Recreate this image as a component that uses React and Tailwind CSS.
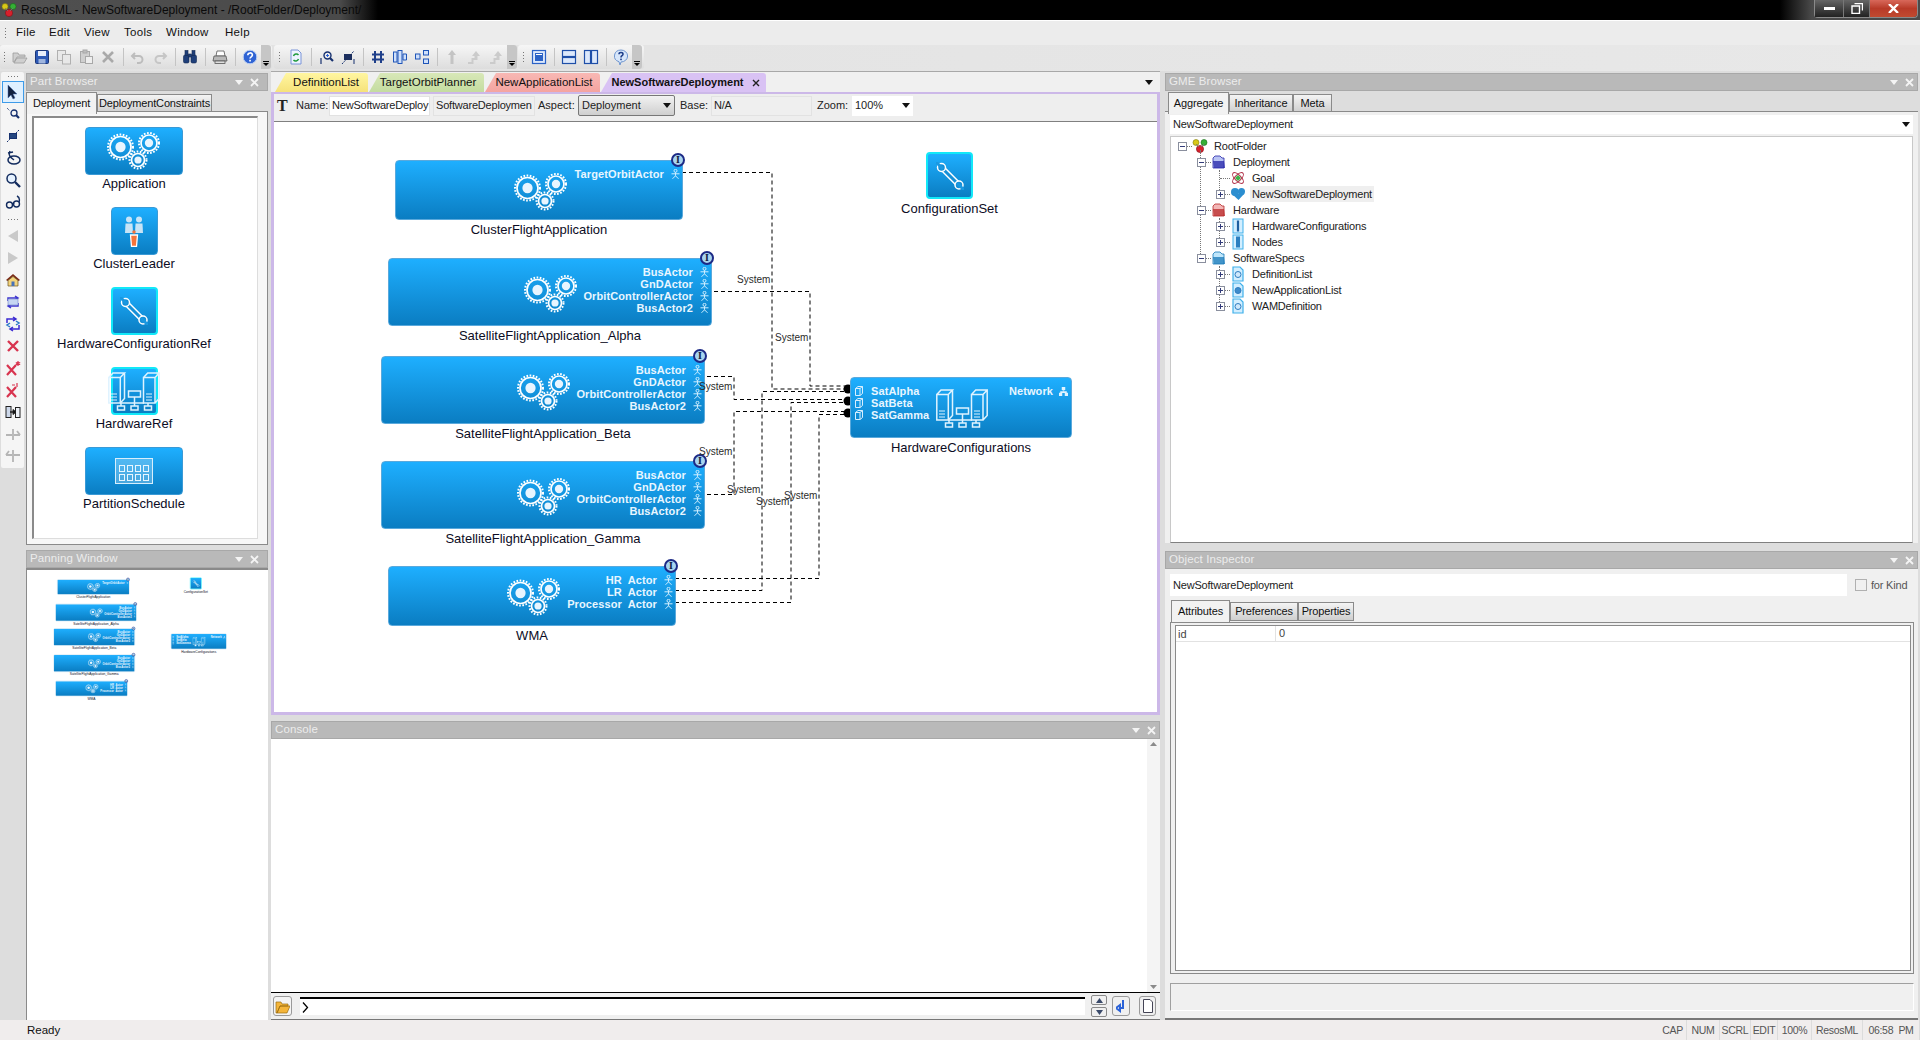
import React from 'react';

const Svg = ({ w = 16, h = 16, vb, className = '', children }) => (
  <svg width={w} height={h} viewBox={vb || `0 0 ${w} ${h}`} className={`shrink-0 ${className}`}>
    {children}
  </svg>
);

const Balls = ({ size = 16 }) => (
  <Svg w={size} h={size} vb="0 0 16 16">
    <circle cx="4" cy="4.5" r="3" fill="#d8c818" stroke="#7d7a10" strokeWidth=".6" />
    <circle cx="12" cy="4.5" r="3" fill="#35b035" stroke="#186b18" strokeWidth=".6" />
    <circle cx="8" cy="11" r="3.6" fill="#d8202c" stroke="#7d1018" strokeWidth=".6" />
    <path d="M4 6l3 3M12 6l-3 3" stroke="#777" strokeWidth=".8" />
  </Svg>
);

// toolbar icons
const icons = {
  open: <path d="M1 13V4h5l1 2h6v2H5l-3 5zm1 1l3-5h10l-3 5z" fill="#cfcfcf" stroke="#9c9c9c" strokeWidth=".8" />,
  save: <g><rect x="1.5" y="1.5" width="13" height="13" rx="1" fill="#2d59b5" stroke="#1b3678" /><rect x="4" y="2" width="8" height="5" fill="#e8eefa" /><rect x="4.5" y="10" width="7" height="4.5" fill="#9fb5de" /></g>,
  copy: <g fill="#e8e8e8" stroke="#b0b0b0"><rect x="1.5" y="1.5" width="8" height="10" /><rect x="6.5" y="5.5" width="8" height="9.5" /></g>,
  paste: <g stroke="#a8a8a8"><rect x="2.5" y="2.5" width="9" height="11" fill="#cfcfcf" /><rect x="5" y="1" width="4" height="3" fill="#bdbdbd" /><rect x="7.5" y="7.5" width="7" height="7" fill="#eee" /></g>,
  del: <path d="M3 3l10 10M13 3L3 13" stroke="#a9a9a9" strokeWidth="2.6" />,
  undo: <path d="M5 4L2 7l3 3M3 7h6a3.5 3.5 0 010 7H7" fill="none" stroke="#bdbdbd" strokeWidth="2" />,
  redo: <path d="M11 4l3 3-3 3M13 7H7a3.5 3.5 0 000 7h2" fill="none" stroke="#c6c6c6" strokeWidth="2" />,
  find: <g fill="#1f3f7a" stroke="#142a52" strokeWidth=".6"><rect x="1.5" y="6" width="5.5" height="8" rx="1.5" /><rect x="9" y="6" width="5.5" height="8" rx="1.5" /><rect x="3" y="1.5" width="3" height="5" /><rect x="10" y="1.5" width="3" height="5" /><rect x="6.5" y="5" width="3" height="3" /></g>,
  print: <g stroke="#555" strokeWidth=".8"><path d="M5 2h7l1 5H4z" fill="#fff" /><path d="M2 7h12l1 5H1z" fill="#b8b8b8" /><rect x="3" y="12" width="10" height="2.5" fill="#dedede" /></g>,
  help: <g><circle cx="8" cy="8" r="6.8" fill="#2f63d4" stroke="#b7ccf2" /><path d="M5.8 6.2c0-3 4.6-3 4.6-.2 0 1.8-2.4 1.8-2.4 3.6" fill="none" stroke="#fff" strokeWidth="1.6" /><rect x="7.2" y="10.8" width="1.7" height="1.7" fill="#fff" /></g>,
  doc: <g><path d="M3 1h7l3 3v11H3z" fill="#eef3ff" stroke="#7a94d8" /><path d="M5.5 7a3 3 0 015-1M10.5 10a3 3 0 01-5 1" fill="none" stroke="#1f9a3c" strokeWidth="1.5" /></g>,
  zoom1: <g stroke="#16306e" fill="none"><circle cx="9.5" cy="6.5" r="3.5" strokeWidth="1.4" /><path d="M12 9l3 3" strokeWidth="2.2" /><path d="M3 9v6" strokeWidth="1.2" /><path d="M8 6.5h3M9.5 5v3" stroke="#2a62d8" /></g>,
  fit: <g><path d="M2 15L14 2" stroke="#16306e" strokeDasharray="2 1" /><rect x="4" y="5" width="8" height="6" fill="#1c2f5e" /><path d="M14 10v5" stroke="#16306e" /></g>,
  grid: <path d="M5 2v12M11 2v12M2 5.5h12M2 10.5h12" stroke="#1f3f8a" strokeWidth="2" />,
  align: <g fill="#cfe0fb" stroke="#1f55b8"><rect x="1.5" y="3" width="3.5" height="10" /><rect x="6" y="1.5" width="4" height="13" /><path d="M11 5h3.5v6H11z" /></g>,
  nodes: <g fill="#cfe0fb" stroke="#1f55b8"><rect x="1.5" y="5" width="4.5" height="5" /><rect x="9.5" y="1.5" width="5" height="4.5" /><rect x="9.5" y="10" width="5" height="4.5" /></g>,
  up1: <path d="M8 1l4 5H9.5v9h-3V6H4z" fill="#c4c4c4" />,
  up2: <path d="M10 2l4 5h-2.5v4h-4v4H2v-2h3.5V9h3V7H6z" fill="#cbcbcb" />,
  panel: <g><rect x="1.5" y="1.5" width="13" height="13" fill="#dce8fb" stroke="#2b62c6" strokeWidth="1.2" /><rect x="4" y="4" width="8" height="8" fill="#2b62c6" /><rect x="5" y="5" width="6" height="1" fill="#fff" /></g>,
  split: <g fill="#dce8fb" stroke="#1f4fa8" strokeWidth="1.2"><rect x="1.5" y="1.5" width="13" height="6" /><rect x="1.5" y="8.5" width="13" height="6" /></g>,
  cols: <g fill="#dce8fb" stroke="#1f4fa8" strokeWidth="1.2"><rect x="1.5" y="1.5" width="6" height="13" /><rect x="8.5" y="1.5" width="6" height="13" /></g>,
  bubble: <g><path d="M8 1a6.6 6 0 110 12l-1 3-1-3.3A6.6 6 0 018 1z" fill="#d7e6fa" stroke="#6f95cf" /><path d="M6 5.2c0-2.2 4-2.2 4 0 0 1.5-2 1.5-2 3.2" fill="none" stroke="#1f3f8a" strokeWidth="1.6" /><rect x="7.2" y="9.6" width="1.6" height="1.6" fill="#1f3f8a" /></g>,
  arrow: <path d="M3 1v13l3-3 2 4 2-1-2-4h4z" fill="#10203f" stroke="#4a6fb0" strokeWidth=".5" />,
  connect: <g stroke="#16306e" fill="none"><circle cx="9" cy="7" r="3" strokeWidth="1.3" /><path d="M11 9l3 3" strokeWidth="2.2" /><path d="M2 2l3 3" strokeDasharray="1 1" /></g>,
  link: <g stroke="#16306e"><path d="M2 14L14 2" strokeDasharray="2 1" /><rect x="4.5" y="5.5" width="7" height="5" fill="#24467f" /></g>,
  lasso: <g fill="none" stroke="#122b5e" strokeWidth="1.5"><ellipse cx="9" cy="10" rx="6" ry="4" /><path d="M5 1c-2 4 0 6 4 9" /><path d="M3 3l5-1" /></g>,
  glass: <g fill="none" stroke="#122b5e"><circle cx="6.5" cy="6.5" r="4.5" strokeWidth="1.5" fill="#e6f2ff" /><path d="M10 10l5 5" strokeWidth="2.4" /></g>,
  specs: <g fill="none" stroke="#122b5e" strokeWidth="1.4"><circle cx="4.5" cy="11" r="3" /><circle cx="11.5" cy="10" r="3" /><path d="M7 10c1-.8 1.500-.8 2 0M14 8c1-3 0-5-2-6" /></g>,
  left: <path d="M13 2v12L3 8z" fill="#c9c9c9" />,
  right: <path d="M3 2v12l10-6z" fill="#c9c9c9" />,
  home: <g><path d="M1 8l7-6 7 6-1.500 1L8 4.500 2.500 9z" fill="#7a2a18" /><path d="M3 8.500L8 4.500l5 4V14H3z" fill="#f4d47c" stroke="#6b5520" strokeWidth=".7" /><rect x="6.500" y="9.500" width="3" height="4.500" fill="#4872b8" /></g>,
  loop: <g fill="none" stroke="#3c33cf" strokeWidth="1.5"><path d="M3 7V4h9M10 2l3 2-3 2M13 9v3H4M6 14l-3-2 3-2" /><rect x="3" y="5" width="10" height="6" fill="#c6d6f2" stroke="#7083c8" strokeWidth=".6" /></g>,
  loops: <g fill="none" stroke="#3b2ad2" strokeWidth="1.500"><path d="M2 7V3h8M8 1l3 2-3 2M14 9v4H6M8 15l-3-2 3-2" /><path d="M11 5l3 2-3 2M5 7l-3 2 3 2" stroke="#2b78c8" /></g>,
  x: <path d="M3 3l10 10M13 3L3 13" stroke="#d8344f" strokeWidth="2.4" />,
  xs: <g><path d="M2 5l9 10M11 5l-9 10" stroke="#d8344f" strokeWidth="2.200" /><path d="M13 1v5M10.800 2.500l4.400 2M15.200 2.500l-4.400 2" stroke="#d8344f" strokeWidth="1.200" /></g>,
  xm: <g><path d="M2 5l9 10M11 5l-9 10" stroke="#d8344f" strokeWidth="2.200" /><path d="M7 3h3M12 1v4" stroke="#d8344f" strokeWidth="1.200" /></g>,
  swap: <g stroke="#222"><rect x="1" y="2.500" width="5" height="11" fill="#cdd8ea" /><rect x="10.500" y="3.500" width="4.500" height="10" fill="#eef2f8" /><path d="M5 8h5" strokeWidth="1.500" /><path d="M8 5.500l3 2.500-3 2.500z" fill="#111" /></g>,
  jl: <path d="M1 9h6M9 9h6M8 3v11M12 5l3 4" stroke="#b5b5b5" strokeWidth="1.800" fill="none" />,
  jr: <path d="M1 7h6M9 7h6M8 2v12M4 3L1 7" stroke="#b5b5b5" strokeWidth="1.800" fill="none" />,
};

const Ico = ({ n, active }) => (
  <div className={`flex h-[22px] w-[22px] shrink-0 items-center justify-center ${active ? 'border border-[#3d9be9] bg-[#dff0ff]' : ''}`}>
    <Svg>{icons[n]}</Svg>
  </div>
);

const Sep = () => <div className="mx-[3.5px] h-[18px] w-px shrink-0 bg-[#c4c4c4]" />;

const Grip = ({ className = '' }) => (
  <div className={`flex shrink-0 flex-col items-center gap-[2px] ${className}`}>
    <i className="block h-px w-px bg-[#777]" />
    <i className="block h-px w-px bg-[#777]" />
    <i className="block h-px w-px bg-[#777]" />
    <i className="block h-px w-px bg-[#777]" />
  </div>
);

const Chevron = () => (
  <div className="flex h-full w-[10px] shrink-0 flex-col items-center justify-end gap-px rounded-r-[3px] bg-[#c6c6c6] pb-[3px]">
    <i className="block h-px w-[6px] bg-black" />
    <Svg w={6} h={3}><path d="M0 0h6L3 3z" fill="#000" /></Svg>
  </div>
);

const Toolbar = ({ className, gripClass, children }) => (
  <div className={`flex h-[24px] items-center rounded-[3px] bg-gradient-to-b from-[#f6f6f6] to-[#dddddd] ${className}`}>
    <Grip className={gripClass} />
    {children}
    <Chevron />
  </div>
);

function TitleBar() {
  return (
    <div className="flex h-[20px] items-center justify-between bg-[linear-gradient(90deg,#505050_0,#4a4a4a_340px,#000_378px,#000_1780px,#4a4a4a_1812px)]">
      <div className="flex items-center">
        <div className="ml-[1px] mr-[4px]"><Balls size={16} /></div>
        <span className="text-[12px] text-[#0a0a0a]">ResosML - NewSoftwareDeployment - /RootFolder/Deployment/</span>
      </div>
      <div className="mr-[2px] flex h-[18px] self-start rounded-b-[4px] border border-t-0 border-[#8a8a8a]">
        <div className="flex w-[29px] items-center justify-center border-r border-[#777] bg-gradient-to-b from-[#666] to-[#222]"><i className="block h-[3px] w-[11px] bg-white" /></div>
        <div className="flex w-[26px] items-center justify-center border-r border-[#777] bg-gradient-to-b from-[#666] to-[#222]">
          <Svg w={12} h={11}><path d="M3.500.5h8v7M1 3h7.500v7.500H1z" fill="none" stroke="#fff" strokeWidth="1.400" /></Svg>
        </div>
        <div className="flex w-[47px] items-center justify-center rounded-br-[4px] bg-gradient-to-b from-[#d8685a] via-[#b83a28] to-[#c04a30]">
          <Svg w={11} h={9}><path d="M1 0l9 9M10 0L1 9" stroke="#fff" strokeWidth="2.400" /></Svg>
        </div>
      </div>
    </div>
  );
}

function MenuBar() {
  const items = [['File', 'w-[33px]'], ['Edit', 'w-[35px]'], ['View', 'w-[40px]'], ['Tools', 'w-[42px]'], ['Window', 'w-[59px]'], ['Help', 'w-[40px]']];
  return (
    <div className="flex h-[25px] items-center border-t border-white bg-[#ececec] pl-[5px]">
      <Grip className="mr-[10px]" />
      {items.map(([t, w]) => <span key={t} className={`${w} text-[11.5px] tracking-[0.3px] text-[#111]`}>{t}</span>)}
    </div>
  );
}

function Toolbars() {
  return (
    <div className="flex h-[26px] items-start bg-gradient-to-r from-[#e2e2e2] to-[#e8e8e8]">
      <Toolbar className="w-[272px]" gripClass="w-[9px]">
        <Ico n="open" /><Ico n="save" /><Ico n="copy" /><Ico n="paste" /><Ico n="del" /><Sep />
        <Ico n="undo" /><Ico n="redo" /><Sep /><Ico n="find" /><Sep /><Ico n="print" /><Sep /><Ico n="help" />
      </Toolbar>
      <Toolbar className="ml-[2px] w-[243px]" gripClass="w-[11px]">
        <Ico n="doc" /><Sep /><Ico n="zoom1" /><Ico n="fit" /><Sep /><Ico n="grid" /><Ico n="align" /><Ico n="nodes" /><Sep />
        <Ico n="up1" /><Ico n="up2" /><Ico n="up2" />
      </Toolbar>
      <Toolbar className="ml-[1px] w-[126px]" gripClass="w-[10px]">
        <Ico n="panel" /><Sep /><Ico n="split" /><Ico n="cols" /><Sep /><Ico n="bubble" />
      </Toolbar>
    </div>
  );
}

function ToolStrip() {
  const top = ['arrow', 'connect', 'link', 'lasso', 'glass', 'specs'];
  const rest = ['left', 'right', 'home', 'loop', 'loops', 'x', 'xs', 'xm', 'swap', 'jl', 'jr'];
  return (
    <div className="ml-[1px] mt-px flex h-[396px] w-[23px] shrink-0 flex-col items-center rounded-[2px] bg-[#f5f5f5]">
      <div className="flex h-[8px] items-center gap-[2px]"><i className="h-px w-px bg-[#777]" /><i className="h-px w-px bg-[#777]" /><i className="h-px w-px bg-[#777]" /><i className="h-px w-px bg-[#777]" /></div>
      <div className="mt-[1px] flex flex-col">
        {top.map((n, i) => <Ico key={n} n={n} active={i === 0} />)}
      </div>
      <div className="my-[2px] flex h-[8px] items-center gap-[2px]"><i className="h-px w-px bg-[#777]" /><i className="h-px w-px bg-[#777]" /><i className="h-px w-px bg-[#777]" /><i className="h-px w-px bg-[#777]" /></div>
      <div className="flex flex-col">
        {rest.map((n) => <Ico key={n} n={n} />)}
      </div>
    </div>
  );
}

const PanelTitle = ({ title, className = '' }) => (
  <div className={`flex h-[18px] shrink-0 items-center justify-between border border-[#a8a8a8] bg-[#b9b9b9] pl-[3px] text-[11.5px] tracking-[0.1px] text-[#ececec] ${className}`}>
    <span>{title}</span>
    <div className="flex items-center gap-[7px]">
      <Svg w={8} h={5}><path d="M0 0h8L4 5z" fill="#f4f4f4" /></Svg>
      <Svg w={9} h={9}><path d="M1 1l7 7M8 1L1 8" stroke="#f4f4f4" strokeWidth="1.800" /></Svg>
    </div>
  </div>
);

const Tab = ({ active, className = '', children }) => (
  <div
    className={`flex shrink-0 items-center justify-center border border-[#8a8a8a] text-[11px] tracking-[-0.15px] text-[#111] ${
      active ? 'z-10 -mb-px mt-0 h-[22px] border-b-0 bg-[#f2f2f2]' : 'mt-[2px] h-[19px] bg-gradient-to-b from-[#f4f4f4] to-[#cfcfcf]'
    } ${className}`}
  >
    {children}
  </div>
);

// diagram pieces
const Gear = ({ cx, cy, r }) => (
  <g fill="none" stroke="#fff">
    <circle cx={cx} cy={cy} r={r - 1} strokeWidth="2" strokeDasharray="1.700 1.500" />
    <circle cx={cx} cy={cy} r={r - 3} strokeWidth="1.700" />
    <circle cx={cx} cy={cy} r={r * 0.38} fill="#e8f5ff" stroke="none" />
  </g>
);

const Gears = () => (
  <Svg w={54} h={38}>
    <Gear cx={13.500} cy={15} r={13.500} />
    <Gear cx={42} cy={11} r={11} />
    <Gear cx={31} cy={28} r={9.500} />
  </Svg>
);

const Person = () => (
  <Svg w={9} h={10}>
    <circle cx="4.500" cy="1.800" r="1.500" fill="none" stroke="#cfeeff" />
    <path d="M4.500 3.300v3.500M.5 4.800h8M4.500 6.800L1.500 9.800M4.500 6.800l3 3" fill="none" stroke="#cfeeff" />
  </Svg>
);

const Servers = () => (
  <Svg w={52} h={39}>
    <g fill="none" stroke="#dff3ff" strokeWidth="1.500">
      <path d="M.8 5.500h11.500V31H.8zM.8 5.500L5 1h11.500L12.300 5.500M16.500 1v25.500L12.300 31" />
      <path d="M35.500 5.500H47V31H35.500zM35.500 5.500L39.700 1h11.500L47 5.500M51.200 1v25.500L47 31" />
      <rect x="20.500" y="19" width="12" height="6" />
      <path d="M26.500 25v6M12 31h24M13 31v3M26.500 31v3M40 31v3" />
      <rect x="9.500" y="34" width="7" height="4" />
      <rect x="23" y="34" width="7" height="4" />
      <rect x="36.500" y="34" width="7" height="4" />
      <path d="M3 22h6M3 25h6M3 28h6M38 22h6M38 25h6M38 28h6" strokeWidth="1" />
    </g>
  </Svg>
);

const Wrench = () => (
  <Svg w={28} h={28}>
    <g fill="none" strokeLinecap="round">
      <path d="M8 8l13 13" stroke="#fff" strokeWidth="6" />
      <path d="M8 8l13 13" stroke="#1590d8" strokeWidth="3" />
      <circle cx="5.500" cy="5.500" r="4" fill="#1590d8" stroke="#fff" strokeWidth="1.500" />
      <circle cx="23" cy="23" r="4" fill="#1590d8" stroke="#fff" strokeWidth="1.500" />
      <path d="M1 1l5 5M27 27l-5-5" stroke="#1a98e0" strokeWidth="3" />
    </g>
  </Svg>
);

const Leaders = () => (
  <Svg w={20} h={31}>
    <g fill="#dcecf8" opacity=".9">
      <circle cx="5" cy="3.500" r="3" /><path d="M1.500 7.500h7l.5 9.500H1z" />
      <circle cx="15" cy="3.500" r="3" /><path d="M11.500 7.500h7l.5 9.500h-8z" />
    </g>
    <circle cx="10" cy="16" r="1.700" fill="#f4743b" />
    <path d="M6.500 19h7l-1 11.500h-5z" fill="#f4743b" stroke="#fff" strokeWidth="1.300" />
  </Svg>
);

const Schedule = () => (
  <div className="grid h-[26px] w-[38px] grid-cols-4 gap-x-[2px] gap-y-[2px] border border-[#d8eefc] bg-[#d8eefc]/30 px-[3px] pb-[2px] pt-[6px]">
    {Array.from({ length: 8 }).map((_, i) => <i key={i} className="block border border-[#e8f6ff]" />)}
  </div>
);

const blueBox = 'relative rounded-[4px] border border-[#5aa9dc] bg-gradient-to-b from-[#1eafff] to-[#0a7dc2]';

const Badge = () => (
  <div className="absolute -right-[3px] -top-[8px] flex h-[14px] w-[14px] items-center justify-center rounded-full border-2 border-[#1d2a86] bg-[#a9d5ee] [font-family:'Liberation_Serif',serif] text-[10px] font-bold leading-none text-[#10183f]">
    I
  </div>
);

const nodes = [
  { name: 'ClusterFlightApplication', pos: 'left-[121px] top-[38px]', box: 'w-[288px] h-[60px]', gear: 'left-[118px] top-[12px]', rows: ['TargetOrbitActor'] },
  { name: 'SatelliteFlightApplication_Alpha', pos: 'left-[114px] top-[136px]', box: 'w-[324px] h-[68px]', gear: 'left-[135px] top-[16px]', rows: ['BusActor', 'GnDActor', 'OrbitControllerActor', 'BusActor2'] },
  { name: 'SatelliteFlightApplication_Beta', pos: 'left-[107px] top-[234px]', box: 'w-[324px] h-[68px]', gear: 'left-[135px] top-[16px]', rows: ['BusActor', 'GnDActor', 'OrbitControllerActor', 'BusActor2'] },
  { name: 'SatelliteFlightApplication_Gamma', pos: 'left-[107px] top-[339px]', box: 'w-[324px] h-[68px]', gear: 'left-[135px] top-[16px]', rows: ['BusActor', 'GnDActor', 'OrbitControllerActor', 'BusActor2'] },
  { name: 'WMA', pos: 'left-[114px] top-[444px]', box: 'w-[288px] h-[60px]', gear: 'left-[118px] top-[11px]', rows: ['HR  Actor', 'LR  Actor', 'Processor  Actor'] },
];

const Label = ({ className = 'mt-[2px]', children }) => (
  <div className={`whitespace-nowrap text-center text-[13px] leading-[16px] text-[#0c0c24] ${className}`}>{children}</div>
);

const AppNode = ({ n }) => (
  <div className={`absolute flex flex-col items-center ${n.pos}`}>
    <div className={`${blueBox} ${n.box}`}>
      <div className={`absolute ${n.gear}`}><Gears /></div>
      <div className="absolute right-[2px] top-[7px] flex flex-col items-end">
        {n.rows.map((r) => (
          <div key={r} className="flex h-[12px] items-center gap-[7px]">
            <span className="whitespace-pre text-[11px] font-bold leading-[12px] tracking-[0.1px] text-[#e8f6ff]">{r}</span>
            <Person />
          </div>
        ))}
      </div>
      <Badge />
    </div>
    <Label>{n.name}</Label>
  </div>
);

const DiagramNodes = () => (
  <>
    {nodes.map((n) => <AppNode key={n.name} n={n} />)}
    <div className="absolute left-[652px] top-[30px] flex w-[47px] flex-col items-center">
      <div className="flex h-[47px] w-[47px] shrink-0 items-center justify-center rounded-[4px] border-2 border-[#12e8f8] bg-gradient-to-b from-[#1eafff] to-[#0a7dc2]"><Wrench /></div>
      <Label>ConfigurationSet</Label>
    </div>
    <div className="absolute left-[576px] top-[255px] flex flex-col items-center">
      <div className={`${blueBox} h-[61px] w-[222px]`}>
        <div className="absolute left-[85px] top-[11px]"><Servers /></div>
        <div className="absolute left-[3px] top-[7px] flex flex-col">
          {['SatAlpha', 'SatBeta', 'SatGamma'].map((s) => (
            <div key={s} className="flex h-[12px] items-center">
              <Svg w={8} h={10} className="ml-[1px]"><path d="M.5 2.500h4.500v7H.5zM.5 2.500L3 .5h4.500L5 2.500M7.500.5v7L5 9.500" fill="none" stroke="#d8efff" /></Svg>
              <span className="ml-[8px] text-[11px] font-bold leading-[12px] tracking-[0.1px] text-[#e8f6ff]">{s}</span>
            </div>
          ))}
        </div>
        <div className="absolute right-[3px] top-[7px] flex h-[12px] items-center gap-[6px]">
          <span className="text-[11px] font-bold leading-[12px] tracking-[0.1px] text-[#e8f6ff]">Network</span>
          <Svg w={9} h={9}><path d="M3 0h3v3H3zM0 6h3v3H0zM6 6h3v3H6zM4.500 3v2M1.500 6V4.500h6V6" fill="#dff3ff" stroke="#dff3ff" strokeWidth=".5" /></Svg>
        </div>
      </div>
      <Label>HardwareConfigurations</Label>
    </div>
  </>
);

const wires = [
  'M682 173.500H772V390H846',
  'M714 292.500H810V387H846',
  'M707 377.500H734V400.500H846',
  'M707 495.500H734V412.500H846',
  'M675 579.500H819V415.500H846',
  'M675 591.500H762V392.500H846',
  'M675 603.500H791V403.500H846',
];

const systemLabels = [
  'left-[463px] top-[152px]',
  'left-[501px] top-[210px]',
  'left-[425px] top-[259px]',
  'left-[425px] top-[324px]',
  'left-[453px] top-[362px]',
  'left-[482px] top-[374px]',
  'left-[510px] top-[368px]',
];

function Canvas() {
  return (
    <div className="relative min-h-0 flex-1 overflow-hidden bg-white">
      <svg className="absolute left-0 top-0" width="883" height="590">
        <g transform="translate(-274 -123)">
          {wires.map((d) => <path key={d} d={d} fill="none" stroke="#000" strokeDasharray="4 3" />)}
          <circle cx="848" cy="390" r="4.500" />
          <circle cx="848" cy="402" r="4.500" />
          <circle cx="848" cy="414" r="4.500" />
          <path d="M848 388h7M848 392h7M848 400h7M848 404h7M848 412h7M848 416h7" stroke="#000" />
        </g>
      </svg>
      <DiagramNodes />
      {systemLabels.map((p) => (
        <span key={p} className={`absolute ${p} text-[10px] leading-[12px] text-[#2b2b2b]`}>System</span>
      ))}
    </div>
  );
}

const EditorTab = ({ color, w, bold, children }) => (
  <div className={`flex h-[19px] items-center justify-center rounded-tr-[3px] text-[#111] [clip-path:polygon(11px_0,100%_0,100%_100%,0_100%)] ${color} ${w} ${bold ? 'text-[11px] font-bold' : 'text-[11.5px]'}`}>
    {children}
  </div>
);

const Field = ({ w, ml, gray, children }) => (
  <div className={`flex h-[20px] shrink-0 items-center overflow-hidden whitespace-nowrap border border-[#e2e2e2] px-[2px] text-[11px] tracking-[-0.2px] text-[#222] ${w} ${ml} ${gray ? 'bg-[#efefef]' : 'bg-white'}`}>
    {children}
  </div>
);

const TLabel = ({ w, ml, children }) => (
  <span className={`shrink-0 text-[11px] text-[#222] ${w} ${ml}`}>{children}</span>
);

const DownTri = ({ className = '' }) => (
  <Svg w={8} h={5} className={className}><path d="M0 0h8L4 5z" fill="#111" /></Svg>
);

function Editor() {
  return (
    <div className="flex h-[644px] shrink-0 flex-col">
      <div className="flex h-[21px] shrink-0 items-end justify-between border-t border-[#a8a8a8] bg-[#f0f0f0] pl-[4px] pr-[7px]">
        <div className="flex items-end gap-px">
          <EditorTab color="bg-gradient-to-b from-[#fff6a0] to-[#f6e27a]" w="w-[93px] pl-[9px]">DefinitionList</EditorTab>
          <EditorTab color="bg-gradient-to-b from-[#d8e8b8] to-[#c4dca0]" w="w-[115px] pl-[3px]">TargetOrbitPlanner</EditorTab>
          <EditorTab color="bg-gradient-to-b from-[#f8b8b4] to-[#f4a4a0]" w="w-[115px] pl-[3px]">NewApplicationList</EditorTab>
          <EditorTab color="bg-[#d9c2f4]" w="w-[165px] gap-[8px] pl-[4px]" bold>
            NewSoftwareDeployment
            <Svg w={8} h={8}><path d="M1 1l6 6M7 1L1 7" stroke="#222" strokeWidth="1.400" /></Svg>
          </EditorTab>
        </div>
        <DownTri className="mb-[7px]" />
      </div>
      <div className="flex min-h-0 flex-1 flex-col border-x-[3px] border-b-[3px] border-t-2 border-x-[#ccb8e8] border-b-[#ccb8e8] border-t-[#ccb8e8] bg-[#eeeeee]">
        <div className="flex h-[28px] shrink-0 items-center border-b border-[#808080] pb-[4px]">
          <span className="ml-[3px] w-[13px] shrink-0 [font-family:'Liberation_Serif',serif] text-[16px] font-bold leading-none text-[#222]">T</span>
          <TLabel ml="ml-[6px]" w="w-[33px]">Name:</TLabel>
          <Field w="w-[101px]">NewSoftwareDeploy</Field>
          <Field w="w-[102px]" ml="ml-[3px]" gray>SoftwareDeploymen</Field>
          <TLabel ml="ml-[3px]" w="w-[40px]">Aspect:</TLabel>
          <div className="flex h-[21px] w-[97px] shrink-0 items-center justify-between rounded-[2px] border border-[#777] bg-gradient-to-b from-[#f2f2f2] to-[#cfcfcf] px-[3px] text-[11px] text-[#222]">
            Deployment <DownTri />
          </div>
          <TLabel ml="ml-[5px]" w="w-[31px]">Base:</TLabel>
          <Field w="w-[101px]" gray>N/A</Field>
          <TLabel ml="ml-[5px]" w="w-[35px]">Zoom:</TLabel>
          <div className="flex h-[20px] w-[61px] shrink-0 items-center justify-between bg-white px-[3px] text-[11px] text-[#222]">
            100% <DownTri />
          </div>
        </div>
        <Canvas />
      </div>
    </div>
  );
}

function Console() {
  return (
    <div className="mt-[6px] flex min-h-0 flex-1 flex-col">
      <PanelTitle title="Console" className="h-[17px] pr-[3px]" />
      <div className="flex min-h-0 flex-1 border-b border-black bg-white">
        <div className="flex-1" />
        <div className="flex w-[13px] flex-col items-center justify-between bg-[#f4f4f4] py-[3px]">
          <Svg w={7} h={4}><path d="M0 4h7L3.500 0z" fill="#8a8a8a" /></Svg>
          <Svg w={7} h={4}><path d="M0 0h7L3.500 4z" fill="#8a8a8a" /></Svg>
        </div>
      </div>
      <div className="flex h-[27px] shrink-0 items-center border-b border-[#777] bg-[#f0f0f0] pl-[2px]">
        <div className="flex h-[20px] w-[19px] items-center justify-center rounded-[3px] border border-[#9a9a9a] bg-[#f4f4f4]">
          <Svg w={15} h={15}><path d="M1 14V3h5l1 2h6v2H5l-3 7zm1 0l3-7h10l-3 7z" fill="#f4b53a" stroke="#9a6b10" strokeWidth=".7" /></Svg>
        </div>
        <div className="ml-[8px] flex h-[18px] w-[785px] items-center border-t-2 border-black bg-white pl-[2px] text-[12px]">
          <Svg w={7} h={11}><path d="M1 .5l4.500 5-4.500 5" fill="none" stroke="#000" strokeWidth="1.300" /></Svg>
        </div>
        <div className="ml-[6px] flex flex-col gap-[2px]">
          <div className="flex h-[10px] w-[16px] items-center justify-center rounded-[2px] border border-[#8a8a8a]"><Svg w={7} h={5}><path d="M0 5h7L3.500 0z" fill="#3a4a6a" /></Svg></div>
          <div className="flex h-[10px] w-[16px] items-center justify-center rounded-[2px] border border-[#8a8a8a]"><Svg w={7} h={5}><path d="M0 0h7L3.500 5z" fill="#3a4a6a" /></Svg></div>
        </div>
        <div className="ml-[5px] flex h-[20px] w-[18px] items-center justify-center rounded-[3px] border border-[#9a9a9a]">
          <Svg w={10} h={13}><path d="M7 0v8H3M4 5L0 8l4 3z" fill="none" stroke="#2b62d8" strokeWidth="2" /></Svg>
        </div>
        <div className="ml-[9px] flex h-[20px] w-[17px] items-center justify-center rounded-[3px] border border-[#9a9a9a]">
          <Svg w={10} h={14}><path d="M.5.5H7L9.500 3v10.500H.5z" fill="#fff" stroke="#445" /></Svg>
        </div>
      </div>
    </div>
  );
}

const Expander = ({ open }) => (
  <div className="relative z-10 flex h-[9px] w-[9px] shrink-0 items-center justify-center border border-[#8a8f9e] bg-white">
    <i className="absolute h-px w-[5px] bg-[#333c7a]" />
    {!open && <i className="absolute h-[5px] w-px bg-[#333c7a]" />}
  </div>
);

const Folder = ({ fill, dark }) => (
  <Svg>
    <path d="M2 4l2-2h5l2 2h2v10H2z" fill={fill} stroke={dark} strokeWidth=".8" />
    <path d="M2 7h11l1 7H3z" fill={dark} opacity=".75" />
  </Svg>
);

const DocIcon = ({ inner }) => (
  <Svg>
    <path d="M3 1h7l3 3v11H3z" fill="#d2eeff" stroke="#3fb0ea" strokeWidth="1.200" />
    <circle cx="8" cy="8.500" r="3" fill={inner} stroke="#2f7dc0" />
  </Svg>
);

const tree = [
  { d: 0, t: 'RootFolder', open: true, ic: <Balls /> },
  { d: 1, t: 'Deployment', open: true, ic: <Folder fill="#b9c4f4" dark="#2626a8" /> },
  { d: 2, t: 'Goal', leaf: true, ic: <Svg><ellipse cx="8" cy="8" rx="7" ry="3" fill="none" stroke="#b03048" transform="rotate(45 8 8)" /><ellipse cx="8" cy="8" rx="7" ry="3" fill="none" stroke="#b03048" transform="rotate(-45 8 8)" /><path d="M8 5l3 3-3 3-3-3z" fill="#3cb44a" /></Svg> },
  { d: 2, t: 'NewSoftwareDeployment', sel: true, ic: <Svg><circle cx="5" cy="6" r="4" fill="#2b8ed0" /><circle cx="11.500" cy="5.500" r="3.500" fill="#2b8ed0" /><path d="M2 8l6.500 6L14 8z" fill="#2b8ed0" /></Svg> },
  { d: 1, t: 'Hardware', open: true, ic: <Folder fill="#f2b6b6" dark="#b82a2a" /> },
  { d: 2, t: 'HardwareConfigurations', ic: <Svg><rect x="3" y="1" width="10" height="14" fill="#d2eeff" stroke="#3fb0ea" /><path d="M8 2.500v11" stroke="#1f5fa0" strokeWidth="2.200" /></Svg> },
  { d: 2, t: 'Nodes', ic: <Svg><rect x="3" y="1" width="10" height="14" fill="#d2eeff" stroke="#3fb0ea" /><rect x="6" y="2.500" width="4" height="11" fill="#2b7fc0" /></Svg> },
  { d: 1, t: 'SoftwareSpecs', open: true, ic: <Folder fill="#bfe6fb" dark="#1878b8" /> },
  { d: 2, t: 'DefinitionList', ic: <DocIcon inner="#cfe8fb" /> },
  { d: 2, t: 'NewApplicationList', ic: <DocIcon inner="#3d8ccc" /> },
  { d: 2, t: 'WAMDefinition', ic: <DocIcon inner="#cfe8fb" /> },
];

const indent = { 0: 'pl-[7px]', 1: 'pl-[26px]', 2: 'pl-[45px]' };

function Tree() {
  return (
    <div className="relative min-h-0 flex-1 border border-[#c8c8c8] border-b-[#808080] bg-white pt-[1px]">
      <i className="absolute left-[29px] top-[13px] h-[108px] border-l border-dotted border-[#777]" />
      <i className="absolute left-[48px] top-[33px] h-[24px] border-l border-dotted border-[#777]" />
      <i className="absolute left-[48px] top-[81px] h-[24px] border-l border-dotted border-[#777]" />
      <i className="absolute left-[48px] top-[129px] h-[40px] border-l border-dotted border-[#777]" />
      {tree.map((r) => (
        <div key={r.t} className={`flex h-[16px] items-center ${indent[r.d]}`}>
          {r.leaf ? <i className="h-[9px] w-[9px] shrink-0" /> : <Expander open={r.open} />}
          <i className={`h-px w-[5px] shrink-0 border-t border-dotted border-[#777] ${r.leaf ? '-ml-[5px] w-[10px]' : ''}`} />
          {r.ic}
          <span className={`ml-[4px] flex h-[16px] items-center whitespace-nowrap px-[2px] text-[11px] tracking-[-0.2px] text-[#222] ${r.sel ? 'w-[124px] bg-[#efefef]' : ''}`}>{r.t}</span>
        </div>
      ))}
    </div>
  );
}

const Part = ({ box, label, cyan, children }) => (
  <div className="flex h-[80px] shrink-0 flex-col items-center">
    <div className={`flex h-[48px] shrink-0 items-center justify-center rounded-[4px] bg-gradient-to-b from-[#1eafff] to-[#0a7dc2] ${box} ${cyan ? 'border-2 border-[#12e8f8]' : 'border border-[#3a9ad6]'}`}>
      {children}
    </div>
    <Label className="mt-px">{label}</Label>
  </div>
);

function LeftColumn() {
  return (
    <div className="ml-[2px] mt-[2px] flex w-[242px] shrink-0 flex-col">
      <div className="flex h-[472px] shrink-0 flex-col">
        <PanelTitle title="Part Browser" className="pr-[8px]" />
        <div className="flex h-[20px] shrink-0 pt-px">
          <Tab active className="w-[71px]">Deployment</Tab>
          <Tab className="w-[115px]">DeploymentConstraints</Tab>
        </div>
        <div className="min-h-0 flex-1 border border-[#8a8a8a] bg-[#f7f7f7] pb-[5px] pl-[5px] pr-[8px] pt-[4px]">
          <div className="h-full w-[226px] border-2 border-b border-r border-[#8a8a8a] border-b-[#ddd] border-r-[#ddd] bg-white pt-[9px]">
            <div className="flex w-[200px] flex-col">
              <Part box="w-[98px]" label="Application"><Gears /></Part>
              <Part box="w-[47px]" label="ClusterLeader"><Leaders /></Part>
              <Part box="w-[47px]" label="HardwareConfigurationRef" cyan><Wrench /></Part>
              <Part box="w-[47px]" label="HardwareRef" cyan><Servers /></Part>
              <Part box="w-[98px]" label="PartitionSchedule"><Schedule /></Part>
            </div>
          </div>
        </div>
      </div>
      <div className="mt-[5px] flex min-h-0 flex-1 flex-col">
        <PanelTitle title="Panning Window" className="pr-[8px]" />
        <div className="relative min-h-0 flex-1 overflow-hidden border-t-2 border-l border-[#8a8a8a] bg-white">
          <div className="absolute left-0 top-0 h-[590px] w-[883px] origin-top-left scale-[0.25]">
            <DiagramNodes />
          </div>
        </div>
      </div>
    </div>
  );
}

function CenterColumn() {
  return (
    <div className="ml-[3px] flex w-[889px] shrink-0 flex-col">
      <Editor />
      <Console />
    </div>
  );
}

function RightColumn() {
  return (
    <div className="ml-[5px] mt-[2px] flex w-[753px] shrink-0 flex-col">
      <div className="flex h-[470px] shrink-0 flex-col">
        <PanelTitle title="GME Browser" className="pr-[3px]" />
        <div className="flex h-[20px] shrink-0 pl-[3px] pt-px">
          <Tab active className="w-[61px]">Aggregate</Tab>
          <Tab className="w-[64px]">Inheritance</Tab>
          <Tab className="w-[39px]">Meta</Tab>
        </div>
        <div className="flex min-h-0 flex-1 flex-col border-t border-[#8a8a8a] bg-[#f0f0f0] px-[5px] pt-[3px]">
          <div className="mb-[2px] flex h-[19px] shrink-0 items-center justify-between bg-white px-[3px] text-[11px] tracking-[-0.2px] text-[#222]">
            NewSoftwareDeployment <DownTri />
          </div>
          <Tree />
        </div>
      </div>
      <div className="mt-[8px] flex min-h-0 flex-1 flex-col">
        <PanelTitle title="Object Inspector" className="pr-[3px]" />
        <div className="flex min-h-0 flex-1 flex-col border-b-2 border-[#777] bg-[#f0f0f0] pb-[7px] pl-[5px] pr-[4px] pt-[5px]">
          <div className="flex h-[22px] shrink-0 items-center">
            <div className="flex h-[22px] w-[677px] items-center bg-white pl-[3px] text-[11px] tracking-[-0.2px] text-[#222]">NewSoftwareDeployment</div>
            <i className="ml-[8px] h-[12px] w-[12px] border border-[#b0b0b0]" />
            <span className="ml-[4px] text-[11px] tracking-[-0.2px] text-[#555]">for Kind</span>
          </div>
          <div className="mt-[4px] flex h-[22px] shrink-0 pl-[1px]">
            <Tab active className="w-[59px]">Attributes</Tab>
            <Tab className="w-[68px]">Preferences</Tab>
            <Tab className="w-[56px]">Properties</Tab>
          </div>
          <div className="h-[352px] shrink-0 border border-[#8a8a8a] p-[2px] pl-[4px]">
            <div className="h-full border border-[#8a8a8a] bg-white">
              <div className="flex h-[16px] items-center border-b border-[#e2e2e2] text-[11px] text-[#444]">
                <span className="h-full w-[100px] border-r border-[#e2e2e2] pl-[2px]">id</span>
                <span className="pl-[3px]">0</span>
              </div>
            </div>
          </div>
          <div className="mt-[9px] min-h-0 flex-1 border border-[#a0a0a0] border-b-white border-r-white" />
        </div>
      </div>
    </div>
  );
}

function StatusBar() {
  const cells = [['CAP', 'w-[28px]'], ['NUM', 'w-[33px]'], ['SCRL', 'w-[31px]'], ['EDIT', 'w-[27px]'], ['100%', 'w-[34px]'], ['ResosML', 'w-[51px]'], ['06:58  PM', 'w-[57px]']];
  return (
    <div className="flex h-[20px] shrink-0 items-center justify-between bg-[#f0eded] pl-[27px] text-[11.5px] text-[#111]">
      <span className="pt-[2px]">Ready</span>
      <div className="flex h-full items-center">
        {cells.map(([t, w]) => (
          <span key={t} className={`flex h-full items-center justify-center whitespace-pre border-r border-[#dcdcdc] pt-[2px] text-[10.5px] tracking-[-0.3px] text-[#555] ${w}`}>{t}</span>
        ))}
      </div>
    </div>
  );
}

export default function App() {
  return (
    <div className="flex h-[1040px] w-[1920px] flex-col overflow-hidden bg-[#dddddd] [font-family:'Liberation_Sans',Arial,sans-serif]">
      <TitleBar />
      <MenuBar />
      <Toolbars />
      <div className="flex min-h-0 flex-1">
        <ToolStrip />
        <LeftColumn />
        <CenterColumn />
        <RightColumn />
      </div>
      <StatusBar />
    </div>
  );
}
